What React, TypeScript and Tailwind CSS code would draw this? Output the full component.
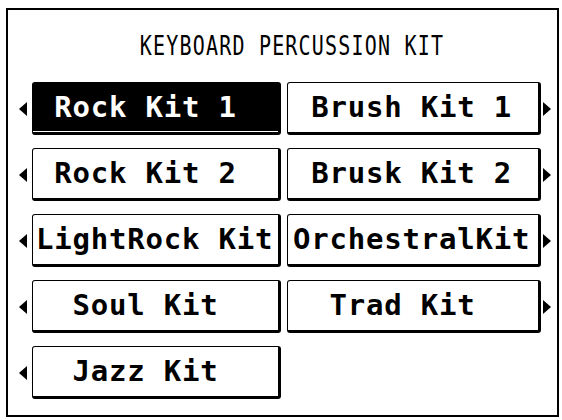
const rows: { left: string; right?: string; selected?: boolean }[] = [
  { left: ' Rock Kit 1', right: ' Brush Kit 1', selected: true },
  { left: ' Rock Kit 2', right: ' Brusk Kit 2' },
  { left: 'LightRock Kit', right: 'OrchestralKit' },
  { left: '  Soul Kit', right: '  Trad Kit' },
  { left: '  Jazz Kit' },
];

function ArrowLeft() {
  return (
    <svg width="8" height="14" viewBox="0 0 8 14" className="block">
      <polygon points="8,0 0,7 8,14" fill="#000" />
    </svg>
  );
}

function ArrowRight() {
  return (
    <svg width="8" height="14" viewBox="0 0 8 14" className="block">
      <polygon points="0,0 8,7 0,14" fill="#000" />
    </svg>
  );
}

function KitButton({ label, selected, side }: { label: string; selected?: boolean; side: 'l' | 'r' }) {
  return (
    <div
      className={
        'flex h-[53px] items-center rounded-[3px] border-t border-l border-r-[3px] border-b-[3px] border-black whitespace-pre font-bold text-[29px] leading-none tracking-[0.8px] ' +
        (side === 'l' ? 'w-[249px] pl-[3px] ' : 'w-[254px] pl-[5px] ') +
        (selected ? 'bg-black text-white shadow-[inset_0_-1px_0_0_#fff]' : 'bg-white text-black')
      }
      style={{ fontFamily: '"DejaVu Sans Mono", "Liberation Mono", monospace' }}
    >
      {label}
    </div>
  );
}

export default function App() {
  return (
    <div className="h-[420px] w-[562px] bg-white pl-[6px] pt-[8px]">
      <div className="flex h-[409px] w-[553px] flex-col border-2 border-black">
        {/* title */}
        <div className="flex h-[72px] items-center justify-center pl-[19px]">
          <span
            className="inline-block scale-y-[1.3] text-[20px] leading-none tracking-[1.2px] text-black"
            style={{ fontFamily: '"DejaVu Sans Mono", "Liberation Mono", monospace' }}
          >
            KEYBOARD PERCUSSION KIT
          </span>
        </div>

        {/* kit grid */}
        <div className="flex flex-col gap-[13px]">
          {rows.map((r, i) => (
            <div key={i} className="flex items-center">
              <div className="flex w-[24px] justify-end pr-[5px]">
                <ArrowLeft />
              </div>
              <KitButton label={r.left} selected={r.selected} side="l" />
              {r.right && (
                <>
                  <div className="ml-[6px]">
                    <KitButton label={r.right} side="r" />
                  </div>
                  <div className="ml-[2px]">
                    <ArrowRight />
                  </div>
                </>
              )}
            </div>
          ))}
        </div>
      </div>
    </div>
  );
}
